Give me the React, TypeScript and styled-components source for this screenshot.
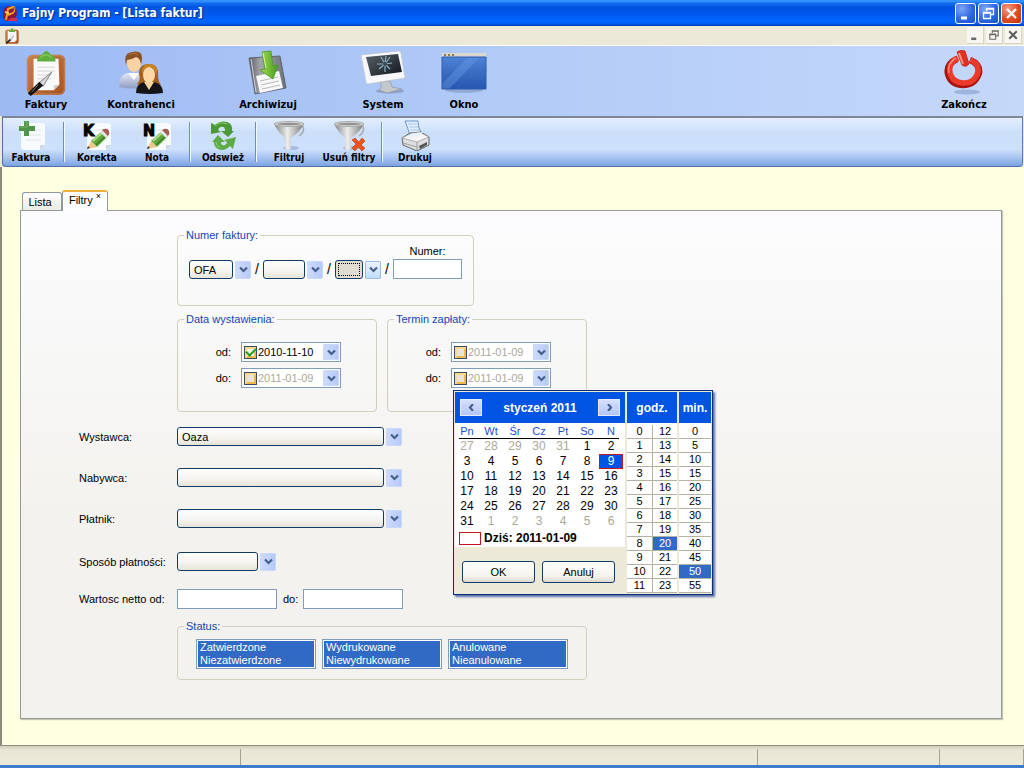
import React from "react";
import styled, { createGlobalStyle, css } from "styled-components";

const GlobalStyle = createGlobalStyle`
  * { box-sizing: border-box; }
  body {
    margin: 0;
    font-family: "Liberation Sans", Arial, sans-serif;
    font-size: 11px;
    line-height: 14px;
    color: #000;
  }
  button, input, select { font: inherit; color: inherit; margin: 0; }
  svg { display: block; flex: none; }
`;

/* ---------- window frame ---------- */

const Window = styled.div`
  display: flex;
  flex-direction: column;
  min-height: 100vh;
  background: #ece9d8;
`;

const TitleBar = styled.header`
  display: flex;
  align-items: center;
  gap: 4px;
  height: 26px;
  padding: 0 2px 0 3px;
  background: linear-gradient(#2b8bff 0, #3c9aff 1px, #1470f0 3px, #0054e3 7px, #0058ee 15px, #0066ff 20px, #0062fa 23px, #0046c8 25px, #003cb4 26px);
`;

const Title = styled.h1`
  flex: 1;
  margin: 0;
  font: bold 12px/16px "DejaVu Sans Condensed", "DejaVu Sans", sans-serif;
  color: #fff;
  text-shadow: 1px 1px 1px #0b2f86;
`;

const WindowButtons = styled.div`
  display: flex;
  gap: 2px;
`;

const WindowButton = styled.button<{ $close?: boolean }>`
  width: 21px;
  height: 21px;
  padding: 0;
  border: 1px solid #fff;
  border-radius: 3px;
  background: ${(p) =>
    p.$close
      ? "radial-gradient(circle at 30% 25%, #f09a80, #e04a22 55%, #c03410)"
      : "radial-gradient(circle at 30% 25%, #7fa6f6, #2f66e4 55%, #1c4fd0)"};
`;

const MenuBar = styled.div`
  display: flex;
  align-items: center;
  justify-content: space-between;
  height: 20px;
  padding: 0 2px 0 5px;
  background: #ece9d8;
  border-bottom: 1px solid #fbfaf4;
`;

const MdiButtons = styled.div`
  display: flex;
  gap: 2px;
`;

const MdiButton = styled.button`
  width: 17px;
  height: 17px;
  padding: 0;
  border: 0;
  border-right: 1px solid #d8d4c4;
  border-bottom: 1px solid #d8d4c4;
  background: #f7f6f0;
`;

/* ---------- toolbars ---------- */

const MainToolbar = styled.nav`
  display: flex;
  height: 70px;
  padding-top: 4px;
  background: linear-gradient(90deg, #9dbaf3, #b2cbf7 50%, #c5d8fa);
`;

const MainItem = styled.button<{ $width: number }>`
  display: flex;
  flex-direction: column;
  align-items: center;
  justify-content: flex-start;
  width: ${(p) => p.$width}px;
  padding: 0;
  border: 0;
  background: none;
  font: bold 11px/14px "DejaVu Sans Condensed", "DejaVu Sans", sans-serif;
`;

const MainIcon = styled.span`
  display: flex;
  justify-content: center;
  height: 48px;
`;

const Spacer = styled.div`
  flex: 1;
`;

const SubToolbar = styled.nav`
  display: flex;
  gap: 4px;
  height: 51px;
  margin: 0 1px 0 2px;
  border: 1px solid #4f6fa8;
  border-top: 2px solid #7f8796;
  border-right-color: #5a7bb8;
  border-radius: 0 0 4px 4px;
  background: linear-gradient(#e4efff 0, #cbdffb 30%, #cde1fc 65%, #a9c5f2 82%, #7ea3e2);
`;

const SubItem = styled.button`
  display: flex;
  flex-direction: column;
  align-items: center;
  justify-content: flex-start;
  width: 56px;
  padding: 2px 0 0;
  border: 0;
  background: none;
  font: bold 10px/14px "DejaVu Sans Condensed", "DejaVu Sans", sans-serif;
  white-space: nowrap;
`;

const SubSeparator = styled.div`
  width: 2px;
  margin: 4px 0;
  background: linear-gradient(90deg, #6a8cc8 50%, #f2f8ff 50%);
`;

/* ---------- workspace and tabs ---------- */

const Workspace = styled.main`
  flex: 1;
  display: flex;
  flex-direction: column;
  padding: 23px 22px 26px 18px;
  border-left: 2px solid #8d8b7c;
  background: #ffffe1;
`;

const Tabs = styled.div`
  display: flex;
  align-items: flex-end;
  height: 20px;
  padding-left: 2px;
`;

const Tab = styled.button<{ $active?: boolean }>`
  height: 18px;
  width: 40px;
  padding: 0 4px 0 0;
  border: 1px solid #919b9c;
  border-bottom: 0;
  border-radius: 3px 3px 0 0;
  background: linear-gradient(#fff, #ecebe4);
  ${(p) =>
    p.$active &&
    css`
      width: 46px;
      height: 21px;
      padding: 0 0 4px;
      margin-bottom: -1px;
      border-top: 2px solid #f0ae3c;
      background: #fdfdff;
      z-index: 1;
    `}
  sup { font-size: 9px; line-height: 0; }
`;

const Panel = styled.section`
  flex: 1;
  padding: 17px 57px;
  border: 1px solid #919b9c;
  box-shadow: 1px 1px 1px #c8c6b0;
  background: linear-gradient(#fcfcfe, #f3f2ee 60%, #f3f2ee);
`;

/* ---------- form ---------- */

const Indent = styled.div`
  display: flex;
  gap: 10px;
  padding-left: 99px;
  margin-bottom: 6px;
`;

const FieldSet = styled.fieldset<{ $width: number; $height: number }>`
  width: ${(p) => p.$width}px;
  min-height: ${(p) => p.$height}px;
  margin: 0;
  padding: 0;
  border: 1px solid #d0d0bf;
  border-radius: 4px;
`;

const Legend = styled.legend`
  margin-left: 6px;
  padding: 0 2px;
  color: #1545b5;
`;

const NumberRow = styled.div`
  display: flex;
  align-items: flex-end;
  padding: 2px 11px;
`;

const NumberField = styled.label`
  display: flex;
  flex-direction: column;
  align-items: center;
  gap: 1px;
  width: 69px;
`;

const Slash = styled.span`
  width: 12px;
  font-size: 14px;
  line-height: 19px;
  text-align: center;
`;

const TextInput = styled.input`
  width: 100px;
  height: 20px;
  padding: 0 4px;
  border: 1px solid #7f9db9;
  background: #fff;
  ${NumberField} & { width: 69px; }
`;

const ComboBox = styled.div`
  display: flex;
  align-items: center;
  gap: 2px;
`;

const ComboSelect = styled.select<{ $width: number; $focused?: boolean }>`
  appearance: none;
  width: ${(p) => p.$width}px;
  height: 19px;
  padding: 0 4px;
  border: 1px solid #123c68;
  border-radius: 3px;
  background: linear-gradient(#fff, #f4f3ee 60%, #e6e3d8);
  ${(p) =>
    p.$focused &&
    css`
      background: #e0ddd2;
      outline: 1px dotted #000;
      outline-offset: -4px;
    `}
`;

const ArrowButton = styled.button<{ $active?: boolean }>`
  display: flex;
  align-items: center;
  justify-content: center;
  width: 16px;
  height: 18px;
  padding: 0;
  border: 1px solid ${(p) => (p.$active ? "#9dbce8" : "#c9d8fb")};
  border-radius: 1px;
  background: ${(p) => (p.$active ? "linear-gradient(#eaf4ff, #c0dcff)" : "linear-gradient(90deg, #cddafc, #b6cafa)")};
`;

const DateRows = styled.div`
  display: flex;
  flex-direction: column;
  gap: 6px;
  padding-top: 16px;
`;

const DateRow = styled.div`
  display: flex;
  align-items: center;
  gap: 10px;
`;

const DateLabel = styled.label`
  width: 53px;
  text-align: right;
`;

const DateBox = styled.div`
  position: relative;
  display: flex;
  align-items: center;
  width: 100px;
  height: 20px;
  padding: 0 1px 0 2px;
  border: 1px solid #7f9db9;
  background: #fff;
  ${ArrowButton} { height: 16px; }
`;

const DateCheck = styled.input`
  appearance: none;
  display: flex;
  align-items: center;
  justify-content: center;
  flex: none;
  width: 13px;
  height: 13px;
  border: 1px solid #3c4c60;
  background: #e8e4dc;
  box-shadow: inset 1px 1px 0 1px #fbd98c, inset -1px -1px 0 1px #f3b84c;
  &:checked {
    background: #f3f3e6;
  }
  &:checked::before {
    content: "";
    width: 8px;
    height: 4px;
    margin-bottom: 3px;
    border: solid #21a121;
    border-width: 0 0 2px 2px;
    transform: rotate(-45deg);
  }
`;

const DateText = styled.input<{ $off?: boolean }>`
  flex: 1;
  min-width: 0;
  padding: 0 0 0 1px;
  border: 0;
  background: none;
  color: ${(p) => (p.$off ? "#aca899" : "#000")};
`;

const RowGroup = styled.div<{ $gap: number; $top: number }>`
  display: flex;
  flex-direction: column;
  gap: ${(p) => p.$gap}px;
  margin-top: ${(p) => p.$top}px;
`;

const FormRow = styled.div`
  display: flex;
  align-items: center;
`;

const RowLabel = styled.label`
  width: 99px;
  padding-left: 1px;
`;

const InnerLabel = styled.label`
  width: 26px;
  padding-left: 6px;
`;

const StatusLists = styled.div`
  display: flex;
  gap: 6px;
  padding: 6px 18px;
`;

const StatusList = styled.select`
  width: 120px;
  height: 30px;
  padding: 1px;
  border: 1px solid #7f9db9;
  border-radius: 0;
  background: #fff;
  overflow: hidden;
  option {
    min-height: 13px;
    padding: 0 2px;
    line-height: 13px;
  }
  option:checked {
    background: linear-gradient(#316ac5, #316ac5);
    -webkit-text-fill-color: #fff;
  }
`;

/* ---------- date and time popup ---------- */

const Popup = styled.div`
  position: absolute;
  z-index: 5;
  top: 21px;
  left: 1px;
  display: flex;
  gap: 2px;
  width: 260px;
  padding: 1px;
  border: 1px solid #0a2f7d;
  background: #ece9d8;
  box-shadow: 2px 2px 2px #5b6fa5;
`;

const CalendarPane = styled.div`
  flex: 1;
`;

const PopupHeader = styled.div`
  display: flex;
  align-items: center;
  justify-content: center;
  height: 31px;
  background: #0054e3;
  color: #fff;
  font-weight: bold;
  font-size: 12px;
`;

const MonthTitle = styled.strong`
  flex: 1;
  text-align: center;
`;

const MonthButton = styled.button`
  display: flex;
  align-items: center;
  justify-content: center;
  width: 22px;
  height: 17px;
  margin: 0 5px;
  padding: 0;
  border: 1px solid #e3ebff;
  background: linear-gradient(#d6e0fd, #b3c6f6);
`;

const CalendarBody = styled.div`
  height: 124px;
  background: #fff;
`;

const Days = styled.table`
  width: 168px;
  table-layout: fixed;
  border-collapse: collapse;
  font-size: 12px;
  line-height: 15px;
  text-align: center;
  th {
    height: 16px;
    padding: 0;
    font-size: 11px;
    font-weight: normal;
    line-height: 14px;
    color: #1b50c8;
  }
  thead { background: linear-gradient(#000, #000) 50% 100% / 160px 1px no-repeat; }
  td { height: 15px; padding: 0; }
`;

const Day = styled.button<{ $other?: boolean; $selected?: boolean }>`
  display: block;
  width: 24px;
  height: 15px;
  padding: 0;
  border: 1px solid ${(p) => (p.$selected ? "#c8141e" : "transparent")};
  background: ${(p) => (p.$selected ? "#0054e3" : "none")};
  color: ${(p) => (p.$selected ? "#fff" : p.$other ? "#aca899" : "#000")};
  line-height: 13px;
`;

const Today = styled.div`
  display: flex;
  align-items: center;
  gap: 3px;
  height: 18px;
  padding-left: 4px;
  font-weight: bold;
  font-size: 12px;
`;

const TodayFrame = styled.span`
  width: 22px;
  height: 13px;
  border: 1px solid #c8141e;
`;

const PopupActions = styled.div`
  display: flex;
  gap: 7px;
  padding: 14px 7px 0;
`;

const PushButton = styled.button`
  width: 73px;
  height: 22px;
  padding: 0;
  border: 1px solid #123c68;
  border-radius: 3px;
  background: linear-gradient(#fff, #f4f3ee 70%, #dcd8ca);
`;

const TimePane = styled.div<{ $width: number }>`
  width: ${(p) => p.$width}px;
`;

const TimeTable = styled.table`
  width: 100%;
  table-layout: fixed;
  border-top: 2px solid #fff;
  border-collapse: separate;
  border-spacing: 0;
  background: #fff;
  text-align: center;
  line-height: 13px;
`;

const TimeCell = styled.td<{ $selected?: boolean }>`
  height: 14px;
  padding: 0;
  border-bottom: 1px solid #b5b2a4;
  background: ${(p) => (p.$selected ? "#316ac5" : "#fff")};
  color: ${(p) => (p.$selected ? "#fff" : "#000")};
  & + & { border-left: 1px solid #b5b2a4; }
`;

/* ---------- status bar ---------- */

const StatusBar = styled.footer`
  display: flex;
  height: 23px;
  padding-top: 3px;
  border-top: 1px solid #908e80;
  border-bottom: 3px solid #3d7ccc;
  background: linear-gradient(#d0cdbd, #e9e6d5 4px, #ece9d8);
`;

const StatusCell = styled.div<{ $width?: number }>`
  ${(p) => (p.$width ? `width: ${p.$width}px;` : "flex: 1;")}
  border-right: 1px solid #a5a293;
`;

/* ---------- icons ---------- */

const Chevron = ({ d = "M1 1.5 4.5 5 8 1.5" }: { d?: string }) => (
  <svg width="9" height="7" viewBox="0 0 9 7" aria-hidden="true">
    <path d={d} fill="none" stroke="#46608e" strokeWidth="2.2" />
  </svg>
);

const AppIcon = () => (
  <svg width="15" height="17" viewBox="0 0 15 17" aria-hidden="true">
    <path d="M1 4 5 1l8 2 1 6-3 7H2L0 11Z" fill="#8c1638" />
    <path d="M3 15 5 4l5-2c3 0 3 6-3 7l-2 1" fill="none" stroke="#f6a21d" strokeWidth="2" />
    <path d="m2 7 4 1" stroke="#ffd76a" strokeWidth="1.3" />
    <path d="M4 16h10v-3H8Z" fill="#d6304f" />
    <path d="M11 2c2 2 2 5 0 7" stroke="#2b2b8c" fill="none" />
  </svg>
);

const ClipboardIcon = ({ width, height }: { width: number; height: number }) => (
  <svg width={width} height={height} viewBox="0 0 42 48" aria-hidden="true">
    <defs>
      <linearGradient id="board" x1="0" y1="0" x2="1" y2="1">
        <stop offset="0" stopColor="#c9814a" />
        <stop offset="1" stopColor="#a65220" />
      </linearGradient>
    </defs>
    <rect x="1" y="5" width="40" height="42" rx="6" fill="url(#board)" />
    <rect x="2" y="6" width="38" height="40" rx="5" fill="none" stroke="#c98a58" />
    <path d="M8 9h26l1 27-6 6H11q-3 0-3-3Z" fill="#fafafa" />
    <path d="m35 36-6 6v-5Z" fill="#d4d0c8" />
    <path d="M12 18h18M12 22h18M12 26h15M12 30h14" stroke="#d3d3d8" />
    <path d="M12 12q-1-6 5-7 4-8 9 0 5 1 5 7Z" fill="#5fae3d" />
    <path d="M15 8q6-6 12 0" fill="none" stroke="#7fc65a" strokeWidth="1.5" />
    <path d="M27 23 14 34l4 4 7-12Z" fill="#d6d9de" stroke="#666" strokeWidth=".8" />
    <path d="M14 33 2 45l3 3 13-11Z" fill="#111" />
    <path d="m13 36-7 8" stroke="#777" />
  </svg>
);

const PeopleIcon = () => (
  <svg width="46" height="44" viewBox="0 0 46 44" aria-hidden="true">
    <defs>
      <linearGradient id="shirt" x1="0" y1="0" x2="0" y2="1">
        <stop offset="0" stopColor="#e6e9f5" />
        <stop offset="1" stopColor="#8f9bc2" />
      </linearGradient>
    </defs>
    <path d="M1 37q0-12 8-14l6 3 7-3q6 3 6 14-13 3-27 0Z" fill="url(#shirt)" />
    <path d="m10 23 6 7 5-7" fill="#fff" />
    <ellipse cx="16" cy="13" rx="7" ry="9" fill="#fbd3a2" />
    <path d="M8 15Q5 3 14 2q10-2 10 6 0 4-1 6-1-6-5-7-5 3-9 3Z" fill="#8a5221" />
    <path d="M11 5q5-4 9 0" stroke="#b4793e" fill="none" />
    <path d="M19 34q4-4 2-10 0-11 11-10 9 1 8 11 0 6 3 10-12 6-24-1Z" fill="#a5611c" />
    <path d="M18 43q0-9 8-11h10q9 2 9 11-13 2-27 0Z" fill="#151517" />
    <path d="m26 32 5 8 5-8Z" fill="#fbd3a2" />
    <ellipse cx="31" cy="25" rx="6" ry="8" fill="#fdd9a8" />
    <path d="M24 25q2-9 8-8 5 1 6 8 4-10-6-11-9 0-8 11Z" fill="#c98327" />
  </svg>
);

const ArchiveIcon = () => (
  <svg width="40" height="46" viewBox="0 0 40 46" aria-hidden="true">
    <defs>
      <linearGradient id="disk" x1="0" y1="0" x2="1" y2="0">
        <stop offset="0" stopColor="#5a5c62" />
        <stop offset=".3" stopColor="#a2a5ac" />
        <stop offset="1" stopColor="#6c7078" />
      </linearGradient>
      <linearGradient id="down" x1="0" y1="0" x2="1" y2="0">
        <stop offset="0" stopColor="#a4de52" />
        <stop offset="1" stopColor="#469a1c" />
      </linearGradient>
    </defs>
    <path d="M1 8 32 6l6 32-31 6Z" fill="url(#disk)" stroke="#54565c" strokeWidth=".8" />
    <path d="m3 9 5 33" stroke="#d0d2d6" />
    <path d="m8 26 23-5 4 17-23 5Z" fill="#f8f8f8" />
    <path d="m12 31 18-4M13 35l18-4M14 39l18-4" stroke="#b9b9bd" />
    <path d="m14 2 9-1 2 15 5-1-5 14-13-9 5-1Z" fill="url(#down)" stroke="#4d9926" strokeWidth=".8" />
    <path d="m15 3 3 15" stroke="#d2f49a" />
  </svg>
);

const MonitorIcon = () => (
  <svg width="46" height="44" viewBox="0 0 46 44" aria-hidden="true">
    <defs>
      <linearGradient id="screen" x1="0" y1="0" x2="1" y2="1">
        <stop offset="0" stopColor="#59616a" />
        <stop offset="1" stopColor="#10161c" />
      </linearGradient>
    </defs>
    <ellipse cx="30" cy="41" rx="14" ry="2.500" fill="#8ea2cc" />
    <path d="m20 32 10-1 2 6 10 2-15 4-8-3q4-2 1-8Z" fill="#c4c7cb" stroke="#8c9096" strokeWidth=".6" />
    <path d="m1 5 38-4q2 0 2 2l4 25-37 6q-2 0-2-2Z" fill="#f8f8fa" stroke="#bfc4cc" strokeWidth=".7" />
    <path d="m6 7 32-3 4 18-31 4Z" fill="url(#screen)" />
    <g stroke="#8fb0c4" strokeWidth="1.200" fill="none">
      <path d="m25 14 5-7M25 14l7-1M25 14l5 5M25 14v8M25 14l-6 5M25 14l-8 0M25 14l-4-7M25 14l1-8" />
    </g>
    <circle cx="25" cy="14" r="2" fill="#39454f" />
  </svg>
);

const WindowIcon = () => (
  <svg width="46" height="44" viewBox="0 0 46 44" aria-hidden="true">
    <defs>
      <linearGradient id="pane" x1="0" y1="0" x2="0" y2="1">
        <stop offset="0" stopColor="#5288da" />
        <stop offset="1" stopColor="#2656ae" />
      </linearGradient>
    </defs>
    <ellipse cx="23" cy="40" rx="19" ry="3" fill="#92a9d8" />
    <rect x="1" y="3" width="44" height="36" fill="url(#pane)" />
    <path d="M1 34 26 8h12L8 39H1Z" fill="#6a9ae4" opacity=".4" />
    <rect x="1" y="3" width="44" height="4" fill="#dad8cf" />
    <path d="M3 5h2M7 5h2M11 5h2" stroke="#8c7a4e" strokeWidth="2" />
    <path d="M1 39V7h44v32Z" fill="none" stroke="#2d5cb2" />
  </svg>
);

const PowerIcon = () => (
  <svg width="42" height="46" viewBox="0 0 42 46" aria-hidden="true">
    <ellipse cx="24" cy="42" rx="13" ry="2.500" fill="#9fb4dd" />
    <path d="M14 9Q3 14 5 24q3 11 15 11t16-12q1-9-9-13" fill="none" stroke="#a81212" strokeWidth="6.500" />
    <path d="M15 8Q5 13 7 23q3 10 14 10t14-11q1-9-8-12" fill="none" stroke="#ea3a28" strokeWidth="5.500" />
    <path d="M13 8Q4 13 6 23" fill="none" stroke="#ff8a78" strokeWidth="1.500" />
    <path d="M14 2q4-3 8-1l4 13q-3 4-7 1Z" fill="#e2301f" stroke="#b61a12" strokeWidth=".7" />
    <path d="m16 3 4 11" stroke="#ff9282" strokeWidth="2" />
  </svg>
);

const SubIcon = ({ children }: { children: React.ReactNode }) => (
  <svg width="32" height="31" viewBox="0 0 32 31" aria-hidden="true">
    {children}
  </svg>
);

const Sheet = () => (
  <>
    <path d="M9 3h18q3 0 3 3v19l-5 5H10q-4 0-4-4V6q0-3 3-3Z" fill="#f8fbfc" />
    <path d="M30 25h-4q-1 0-1 1v4Z" fill="#ccd6de" />
    <path d="M10 10h16M10 15h16M10 20h16" stroke="#dde3e7" />
  </>
);

const NewInvoiceIcon = () => (
  <SubIcon>
    <Sheet />
    <path d="M9 1h5v5h6v5h-6v5H9v-5H4V6h5Z" fill="#4f9648" />
    <path d="M10 2h2v5H5" fill="none" stroke="#74b56a" />
  </SubIcon>
);

const Letter = styled.text`
  font: bold 16px "DejaVu Sans Condensed", "DejaVu Sans", sans-serif;
  stroke: #000;
  stroke-width: 1px;
`;

const MarkedSheetIcon = ({ letter }: { letter: string }) => (
  <SubIcon>
    <Sheet />
    <path d="m10 21 11-10 6 5-11 11Z" fill="#5fa63c" />
    <path d="m12 21 10-9" stroke="#a9dc80" strokeWidth="2" />
    <path d="m15 25 11-10" stroke="#35821f" strokeWidth="1.500" />
    <path d="m6 29 4-8 6 6Z" fill="#edc68a" />
    <path d="m6 29 1-3 2 2Z" fill="#333" />
    <path d="m19 12 2-2 6 6-2 2Z" fill="#e4e6e8" />
    <path d="m21 10 2-1q4-1 5 2t-1 5Z" fill="#a85c50" />
    <Letter x="2" y="16">{letter}</Letter>
  </SubIcon>
);

const RefreshIcon = () => (
  <SubIcon>
    <path d="M4 3 8 5Q13 0 20 2q6 2 5 9h2l-6 6-7-6h4q0-5-4-4-2 0-3 3l3 2-10 2Z" fill="#4c9a36" />
    <path d="M29 17l-3 12-3-3q-6 6-12 3-4-2-4-7H5l6-7 7 7h-4q0 4 4 3 2-1 2-3l-3-2Z" fill="#5eab45" />
    <path d="M8 6q5-5 12-2M9 22q0 4 4 6" fill="none" stroke="#89cc6c" />
  </SubIcon>
);

const FilterIcon = ({ remove }: { remove?: boolean }) => (
  <SubIcon>
    <defs>
      <linearGradient id={remove ? "funnelB" : "funnelA"} x1="0" y1="0" x2="1" y2="0">
        <stop offset="0" stopColor="#858585" />
        <stop offset=".45" stopColor="#ececec" />
        <stop offset="1" stopColor="#7b7b7b" />
      </linearGradient>
    </defs>
    <ellipse cx="18" cy="28" rx="8" ry="2" fill="#a6bbdf" />
    <path d="M1 4q4 8 11 14v11q3 2 6 0V18Q27 12 31 4Z" fill={`url(#${remove ? "funnelB" : "funnelA"})`} />
    <ellipse cx="16" cy="4" rx="15" ry="2.500" fill="#d2d2d0" stroke="#a2a2a2" strokeWidth=".8" />
    <ellipse cx="16" cy="4" rx="12" ry="1.200" fill="#929290" />
    <path d="M30 6q2 6-4 10" stroke="#aaa" fill="none" strokeWidth="1.500" />
    {remove && <path d="m19 20 3-2 4 4 3-4 3 3-4 4 4 3-3 3-4-4-3 4-3-3 4-4Z" fill="#e9531d" stroke="#bc3a0c" strokeWidth=".6" />}
  </SubIcon>
);

const PrinterIcon = () => (
  <SubIcon>
    <path d="M6 1h13q0 8 4 13L11 16Q9 8 6 1Z" fill="#e0eeff" stroke="#4f7fc0" strokeWidth=".8" />
    <path d="M9 4h9M10 7h9M11 10h9" stroke="#a6c5ea" />
    <path d="m3 18 8-5 11-1 8 5v8l-12 6L4 25Z" fill="#dedede" stroke="#55585c" strokeWidth=".9" />
    <path d="m3 18 15 4 12-5-8-4-11 1Z" fill="#f5f5f5" stroke="#8c8c8c" strokeWidth=".6" />
    <path d="M18 22v8" stroke="#9a9a9e" />
    <path d="m9 16 5-3 10-1-4 5Z" fill="#e6f0ff" />
    <path d="m4 23 14 4" stroke="#a1a1a4" />
    <path d="m20 26 8-4v3l-7 4Z" fill="#555" />
  </SubIcon>
);

const MinimizeGlyph = ({ color }: { color: string }) => (
  <svg width="100%" height="100%" viewBox="0 0 19 19" aria-hidden="true">
    <path d="M5 14h6" stroke={color} strokeWidth="3" />
  </svg>
);

const RestoreGlyph = ({ color }: { color: string }) => (
  <svg width="100%" height="100%" viewBox="0 0 19 19" aria-hidden="true">
    <path d="M7.500 7V4.500h7v6H12M7 5h8" fill="none" stroke={color} strokeWidth="1.300" />
    <path d="M4.500 8.500h7v6h-7ZM4 9h8" fill="none" stroke={color} strokeWidth="1.300" />
  </svg>
);

const CloseGlyph = ({ color }: { color: string }) => (
  <svg width="100%" height="100%" viewBox="0 0 19 19" aria-hidden="true">
    <path d="m5 5 9 9m0-9-9 9" stroke={color} strokeWidth="2.300" />
  </svg>
);

/* ---------- composed parts ---------- */

interface MainActionProps {
  width: number;
  icon: React.ReactNode;
  children: React.ReactNode;
}

const MainAction = ({ width, icon, children }: MainActionProps) => (
  <MainItem type="button" $width={width}>
    <MainIcon>{icon}</MainIcon>
    {children}
  </MainItem>
);

interface ComboProps {
  id: string;
  label?: string;
  width: number;
  value?: string;
  focused?: boolean;
}

const Combo = ({ id, label, width, value = "", focused }: ComboProps) => (
  <ComboBox>
    <ComboSelect id={id} aria-label={label} $width={width} $focused={focused} defaultValue={value}>
      <option value={value}>{value}</option>
    </ComboSelect>
    <ArrowButton type="button" aria-label="Rozwiń" $active={focused}>
      <Chevron />
    </ArrowButton>
  </ComboBox>
);

interface DateFieldProps {
  id: string;
  label: string;
  value: string;
  checked?: boolean;
  children?: React.ReactNode;
}

const DateField = ({ id, label, value, checked, children }: DateFieldProps) => (
  <DateRow>
    <DateLabel htmlFor={id}>{label}</DateLabel>
    <DateBox>
      <DateCheck type="checkbox" aria-label={`Włącz datę ${label}`} defaultChecked={checked} />
      <DateText id={id} type="text" defaultValue={value} $off={!checked} />
      <ArrowButton type="button" aria-label="Kalendarz">
        <Chevron />
      </ArrowButton>
      {children}
    </DateBox>
  </DateRow>
);

const weekdays = ["Pn", "Wt", "Śr", "Cz", "Pt", "So", "N"];
const dayOffsets = Array.from({ length: 42 }, (_, i) => i - 4);
const weeks = Array.from({ length: 6 }, (_, w) => dayOffsets.slice(w * 7, w * 7 + 7));
const dayNumber = (n: number) => (n < 1 ? n + 31 : n > 31 ? n - 31 : n);
const slots = Array.from({ length: 12 }, (_, i) => i);

const DateTimePopup = () => (
  <Popup role="dialog" aria-label="Wybór daty i godziny">
    <CalendarPane>
      <PopupHeader>
        <MonthButton type="button" aria-label="Poprzedni miesiąc">
          <Chevron d="M6 0 3 3.500 6 7" />
        </MonthButton>
        <MonthTitle>styczeń 2011</MonthTitle>
        <MonthButton type="button" aria-label="Następny miesiąc">
          <Chevron d="M3 0 6 3.500 3 7" />
        </MonthButton>
      </PopupHeader>
      <CalendarBody>
        <Days>
          <thead>
            <tr>
              {weekdays.map((d) => (
                <th key={d} scope="col">{d}</th>
              ))}
            </tr>
          </thead>
          <tbody>
            {weeks.map((week) => (
              <tr key={week[0]}>
                {week.map((n) => (
                  <td key={n}>
                    <Day type="button" $other={n < 1 || n > 31} $selected={n === 9}>
                      {dayNumber(n)}
                    </Day>
                  </td>
                ))}
              </tr>
            ))}
          </tbody>
        </Days>
        <Today>
          <TodayFrame />
          Dziś: 2011-01-09
        </Today>
      </CalendarBody>
      <PopupActions>
        <PushButton type="button">OK</PushButton>
        <PushButton type="button">Anuluj</PushButton>
      </PopupActions>
    </CalendarPane>
    <TimePane $width={50}>
      <PopupHeader>godz.</PopupHeader>
      <TimeTable>
        <tbody>
          {slots.map((h) => (
            <tr key={h}>
              <TimeCell>{h}</TimeCell>
              <TimeCell $selected={h + 12 === 20}>{h + 12}</TimeCell>
            </tr>
          ))}
        </tbody>
      </TimeTable>
    </TimePane>
    <TimePane $width={32}>
      <PopupHeader>min.</PopupHeader>
      <TimeTable>
        <tbody>
          {slots.map((m) => (
            <tr key={m}>
              <TimeCell $selected={m * 5 === 50}>{m * 5}</TimeCell>
            </tr>
          ))}
        </tbody>
      </TimeTable>
    </TimePane>
  </Popup>
);

const statusGroups = [
  ["Zatwierdzone", "Niezatwierdzone"],
  ["Wydrukowane", "Niewydrukowane"],
  ["Anulowane", "Nieanulowane"],
];

export default function App() {
  return (
    <Window>
      <GlobalStyle />
      <TitleBar>
        <AppIcon />
        <Title>Fajny Program - [Lista faktur]</Title>
        <WindowButtons>
          <WindowButton type="button" aria-label="Minimalizuj"><MinimizeGlyph color="#fff" /></WindowButton>
          <WindowButton type="button" aria-label="Przywróć"><RestoreGlyph color="#fff" /></WindowButton>
          <WindowButton type="button" aria-label="Zamknij" $close><CloseGlyph color="#fff" /></WindowButton>
        </WindowButtons>
      </TitleBar>
      <MenuBar>
        <ClipboardIcon width={14} height={16} />
        <MdiButtons>
          <MdiButton type="button" aria-label="Minimalizuj okno"><MinimizeGlyph color="#6a6a64" /></MdiButton>
          <MdiButton type="button" aria-label="Przywróć okno"><RestoreGlyph color="#6a6a64" /></MdiButton>
          <MdiButton type="button" aria-label="Zamknij okno"><CloseGlyph color="#5a5a54" /></MdiButton>
        </MdiButtons>
      </MenuBar>

      <MainToolbar>
        <MainAction width={92} icon={<ClipboardIcon width={42} height={46} />}>Faktury</MainAction>
        <MainAction width={98} icon={<PeopleIcon />}>Kontrahenci</MainAction>
        <MainAction width={156} icon={<ArchiveIcon />}>Archiwizuj</MainAction>
        <MainAction width={74} icon={<MonitorIcon />}>System</MainAction>
        <MainAction width={88} icon={<WindowIcon />}>Okno</MainAction>
        <Spacer />
        <MainAction width={120} icon={<PowerIcon />}>Zakończ</MainAction>
      </MainToolbar>

      <SubToolbar>
        <SubItem type="button"><NewInvoiceIcon />Faktura</SubItem>
        <SubSeparator />
        <SubItem type="button"><MarkedSheetIcon letter="K" />Korekta</SubItem>
        <SubItem type="button"><MarkedSheetIcon letter="N" />Nota</SubItem>
        <SubSeparator />
        <SubItem type="button"><RefreshIcon />Odswież</SubItem>
        <SubSeparator />
        <SubItem type="button"><FilterIcon />Filtruj</SubItem>
        <SubItem type="button"><FilterIcon remove />Usuń filtry</SubItem>
        <SubSeparator />
        <SubItem type="button"><PrinterIcon />Drukuj</SubItem>
      </SubToolbar>

      <Workspace>
        <Tabs role="tablist">
          <Tab type="button" role="tab">Lista</Tab>
          <Tab type="button" role="tab" aria-selected $active>Filtry <sup>×</sup></Tab>
        </Tabs>
        <Panel>
          <Indent>
            <FieldSet $width={297} $height={78}>
              <Legend>Numer faktury:</Legend>
              <NumberRow>
                <Combo id="series" label="Seria" width={44} value="OFA" />
                <Slash>/</Slash>
                <Combo id="month" label="Miesiąc" width={42} />
                <Slash>/</Slash>
                <Combo id="year" label="Rok" width={28} focused />
                <Slash>/</Slash>
                <NumberField>
                  Numer:
                  <TextInput type="text" />
                </NumberField>
              </NumberRow>
            </FieldSet>
          </Indent>
          <Indent>
            <FieldSet $width={200} $height={100}>
              <Legend>Data wystawienia:</Legend>
              <DateRows>
                <DateField id="issued-from" label="od:" value="2010-11-10" checked />
                <DateField id="issued-to" label="do:" value="2011-01-09" />
              </DateRows>
            </FieldSet>
            <FieldSet $width={200} $height={100}>
              <Legend>Termin zapłaty:</Legend>
              <DateRows>
                <DateField id="due-from" label="od:" value="2011-01-09" />
                <DateField id="due-to" label="do:" value="2011-01-09">
                  <DateTimePopup />
                </DateField>
              </DateRows>
            </FieldSet>
          </Indent>

          <RowGroup $top={15} $gap={22}>
            <FormRow>
              <RowLabel htmlFor="issuer">Wystawca:</RowLabel>
              <Combo id="issuer" width={207} value="Oaza" />
            </FormRow>
            <FormRow>
              <RowLabel htmlFor="buyer">Nabywca:</RowLabel>
              <Combo id="buyer" width={207} />
            </FormRow>
            <FormRow>
              <RowLabel htmlFor="payer">Płatnik:</RowLabel>
              <Combo id="payer" width={207} />
            </FormRow>
          </RowGroup>
          <RowGroup $top={24} $gap={18}>
            <FormRow>
              <RowLabel htmlFor="method">Sposób płatności:</RowLabel>
              <Combo id="method" width={81} />
            </FormRow>
            <FormRow>
              <RowLabel htmlFor="net-from">Wartosc netto od:</RowLabel>
              <TextInput id="net-from" type="text" />
              <InnerLabel htmlFor="net-to">do:</InnerLabel>
              <TextInput id="net-to" type="text" />
            </FormRow>
          </RowGroup>

          <RowGroup $top={10} $gap={0}>
            <Indent>
              <FieldSet $width={410} $height={61}>
                <Legend>Status:</Legend>
                <StatusLists>
                  {statusGroups.map((group) => (
                    <StatusList key={group[0]} multiple size={2} defaultValue={group} aria-label={group[0]}>
                      {group.map((name) => (
                        <option key={name} value={name}>{name}</option>
                      ))}
                    </StatusList>
                  ))}
                </StatusLists>
              </FieldSet>
            </Indent>
          </RowGroup>
        </Panel>
      </Workspace>

      <StatusBar>
        <StatusCell $width={241} />
        <StatusCell />
        <StatusCell $width={182} />
        <StatusCell $width={84} />
      </StatusBar>
    </Window>
  );
}
